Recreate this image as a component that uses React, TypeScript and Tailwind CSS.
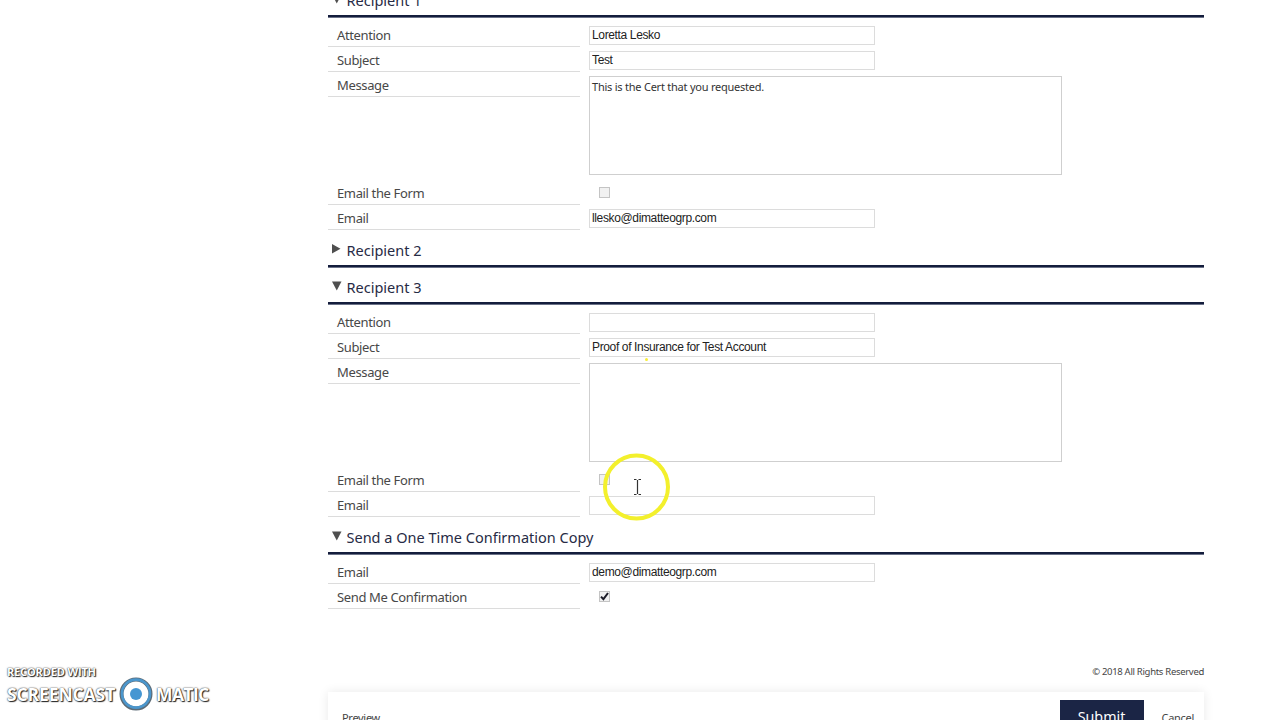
import type { ReactNode } from 'react';

interface SectionProps {
  title: string;
  open?: boolean;
  children?: ReactNode;
}

function Section({ title, open = true, children }: SectionProps) {
  return (
    <section>
      <h2 className="flex h-[37px] items-start border-b-2 border-[#141d3c] pl-1 shadow-[0_1px_0_#6b7288]">
        <svg className="mt-[14px] h-[10px] w-[10px]" viewBox="0 0 10 10">
          <path d={open ? 'M0 0.5H9.5L4.75 9.5Z' : 'M0 0V9.5L8.5 4.75Z'} fill="#4f4f4f" />
        </svg>
        <span className="ml-[4.5px] mt-[10px] whitespace-nowrap text-[14.5px] leading-5 text-[#272b45]">
          {title}
        </span>
      </h2>
      {open && <div className="pt-[5px]">{children}</div>}
    </section>
  );
}

interface RowProps {
  label: string;
  tall?: boolean;
  children: ReactNode;
}

function Row({ label, tall = false, children }: RowProps) {
  return (
    <div className={`flex items-start ${tall ? 'h-[108px]' : 'h-[25px]'}`}>
      <label className="h-[25px] w-[252px] shrink-0 border-b border-[#dcdcdc] pl-[9px] pt-[3px] text-[13px] leading-5 tracking-[-0.36px] text-[#484848]">
        {label}
      </label>
      <div className="ml-[9px] pt-1">{children}</div>
    </div>
  );
}

function TextField({ value = '' }: { value?: string }) {
  return (
    <input
      type="text"
      defaultValue={value}
      className="block h-[19px] w-[286px] border border-[#dcdcdc] bg-white px-[2px] pb-px font-['Liberation_Sans',sans-serif] text-[12px] leading-4 tracking-[-0.36px] text-[#222] outline-none"
    />
  );
}

function MessageField({ value = '' }: { value?: string }) {
  return (
    <textarea
      defaultValue={value}
      className="block h-[99px] w-[473px] resize-none border border-[#cfcfcf] bg-white px-[2px] pt-[2px] text-[11px] leading-4 tracking-[-0.23px] text-[#333] outline-none"
    />
  );
}

function CheckField({ checked = false }: { checked?: boolean }) {
  return (
    <div className="ml-[10px] mt-[3px] h-[11px] w-[11px] border border-[#c4c4c4] bg-[#f1f1f1]">
      {checked && (
        <svg className="block h-[9px] w-[9px]" viewBox="0 0 9 9">
          <path d="M1 4.6L3.4 7.2L8 1" fill="none" stroke="#1c1c28" strokeWidth="2" />
        </svg>
      )}
    </div>
  );
}

interface RecipientProps {
  title: string;
  attention?: string;
  subject: string;
  message?: string;
  email?: string;
}

function Recipient({ title, attention, subject, message, email }: RecipientProps) {
  return (
    <Section title={title}>
      <Row label="Attention"><TextField value={attention} /></Row>
      <Row label="Subject"><TextField value={subject} /></Row>
      <Row label="Message" tall><MessageField value={message} /></Row>
      <Row label="Email the Form"><CheckField /></Row>
      <Row label="Email"><TextField value={email} /></Row>
    </Section>
  );
}

function Watermark() {
  return (
    <div className="absolute left-[7px] top-[665px] font-['Open_Sans',sans-serif] font-bold text-white [text-shadow:1px_1px_1px_#222,0_0_1px_#333,0_0_2px_#777]">
      <div className="text-[11px] leading-[14px] tracking-[-0.15px]">RECORDED WITH</div>
      <div className="-mt-[2px] flex h-[34px] items-center text-[17.5px] leading-[34px]">
        <span className="w-[112px] tracking-[-0.1px]">SCREENCAST</span>
        <svg className="h-[34px] w-[34px]" viewBox="0 0 34 34">
          <circle cx="17" cy="17" r="14.5" fill="#fff" stroke="#5d6b76" strokeWidth="4" />
          <circle cx="17" cy="16.6" r="14" fill="none" stroke="#4b96cc" strokeWidth="2.6" />
          <circle cx="17" cy="17" r="6" fill="#4596d2" />
        </svg>
        <span className="ml-[3px] tracking-[-0.6px]">MATIC</span>
      </div>
    </div>
  );
}

function Cursor() {
  return (
    <svg className="absolute left-[602px] top-[453px] h-[70px] w-[70px]" viewBox="0 0 70 70">
      <circle cx="34.5" cy="34" r="31.5" fill="none" stroke="#f3f02c" strokeWidth="4" />
      <path d="M32 26.5H34.5M36.5 26.5H39M35.5 27V41M32 41.5H34.5M36.5 41.5H39" fill="none" stroke="#333" strokeWidth="1.2" />
    </svg>
  );
}

export default function App() {
  return (
    <div className="relative h-[720px] w-[1280px] overflow-hidden bg-white font-['Noto_Sans','Open_Sans',sans-serif]">
      <main className="-mt-5 ml-[328px] w-[876px]">
        <Recipient
          title="Recipient 1"
          attention="Loretta Lesko"
          subject="Test"
          message="This is the Cert that you requested."
          email="llesko@dimatteogrp.com"
        />
        <Section title="Recipient 2" open={false} />
        <Recipient title="Recipient 3" subject="Proof of Insurance for Test Account" />
        <Section title="Send a One Time Confirmation Copy">
          <Row label="Email"><TextField value="demo@dimatteogrp.com" /></Row>
          <Row label="Send Me Confirmation"><CheckField checked /></Row>
        </Section>

        <p className="mt-[55px] text-right text-[9.5px] leading-4 tracking-[-0.3px] text-[#444]">© 2018 All Rights Reserved</p>

        <footer className="mt-3 flex h-[60px] items-start justify-end bg-white pt-2 text-[11px] leading-4 tracking-[-0.3px] text-[#444] shadow-[0_0_10px_rgba(0,0,0,0.09)]">
          <span className="ml-[14px] mr-auto mt-[10px]">Preview</span>
          <button className="h-[34px] w-[84px] bg-[#1b2545] text-[14.3px] leading-5 tracking-normal text-white">Submit</button>
          <span className="ml-[18px] mr-[10px] mt-[10px]">Cancel</span>
        </footer>
      </main>

      <span className="absolute left-[645px] top-[358px] h-[3px] w-[3px] rounded-full bg-[#f7ee3a]" />
      <Cursor />
      <Watermark />
    </div>
  );
}
